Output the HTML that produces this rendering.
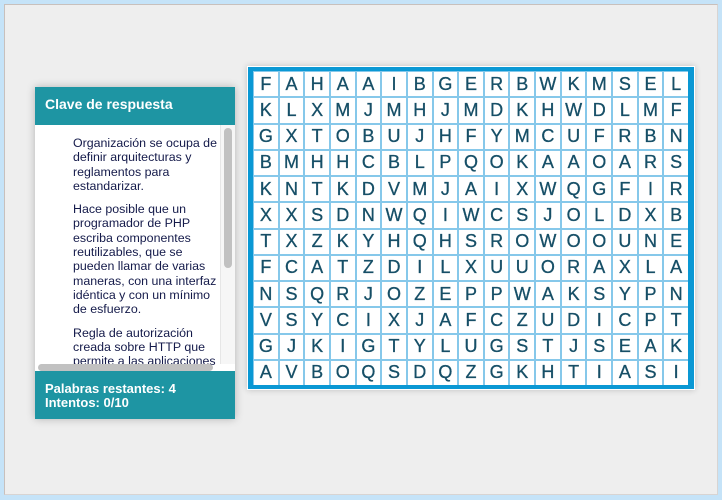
<!DOCTYPE html>
<html><head><meta charset="utf-8"><style>
html,body{margin:0;padding:0;}
body{width:722px;height:500px;background:#c5e3f8;position:relative;overflow:hidden;font-family:"Liberation Sans",Arial,sans-serif;}
.page{position:absolute;left:4px;top:4px;width:714px;height:491px;background:#eeeeee;border-top:1px solid #c8c0bc;border-left:1px solid #c8c0bc;border-right:1px solid #d8d4d2;border-bottom:1px solid #d8d4d2;box-sizing:border-box;}
.panel{position:absolute;left:35px;top:87px;width:200px;height:332px;background:#fff;box-shadow:0 0 8px rgba(0,0,0,0.25);}
.hdr{position:absolute;left:0;top:0;width:200px;height:38px;background:#1e95a3;color:#fff;font-weight:bold;font-size:14px;line-height:16px;box-sizing:border-box;padding:9px 0 0 10px;}
.body{position:absolute;left:0;top:38px;width:200px;height:246px;overflow:hidden;}
.txt{position:absolute;left:38px;top:11px;width:150px;font-size:12.4px;line-height:14.3px;color:#141a4a;}
.txt p{margin:0 0 9px 0;}
.vtrack{position:absolute;left:185px;top:0;width:15px;height:239px;background:#f6f6f6;border-left:1px solid #e6e6e6;}
.vthumb{position:absolute;left:189px;top:3px;width:8px;height:140px;background:#c1c1c1;border-radius:4px;}
.hthumb{position:absolute;left:3px;top:239px;width:175px;height:7px;background:#c1c1c1;border-radius:4px;}
.ftr{position:absolute;left:0;top:284px;width:200px;height:48px;background:#1e95a3;color:#fff;font-weight:bold;font-size:13px;line-height:14px;box-sizing:border-box;padding:11px 0 0 10px;}
.grid{position:absolute;left:247px;top:66px;width:448px;height:324px;background:#fff;box-shadow:0 0 6px rgba(0,0,0,0.2);}
.gi{position:absolute;left:1px;top:1px;width:446px;height:322px;background:#0a98d4;}
.cells{position:absolute;left:5px;top:4px;width:435px;height:314px;background:#86c8ea;display:grid;grid-template-columns:repeat(17,1fr);grid-template-rows:repeat(12,1fr);gap:1px;padding:0;}
.cells span{background:#fff;color:#164f67;font-size:18px;display:flex;align-items:center;justify-content:center;margin:1px 0 0 1px;-webkit-text-stroke:0.3px #164f67;}
</style></head><body>
<div class="page"></div>
<div class="panel">
<div class="hdr">Clave de respuesta</div>
<div class="body">
<div class="txt">
<p>Organización se ocupa de definir arquitecturas y reglamentos para estandarizar.</p>
<p>Hace posible que un programador de PHP escriba componentes reutilizables, que se pueden llamar de varias maneras, con una interfaz idéntica y con un mínimo de esfuerzo.</p>
<p>Regla de autorización creada sobre HTTP que permite a las aplicaciones</p>
</div>
<div class="vtrack"></div><div class="vthumb"></div>
<div class="hthumb"></div>
</div>
<div class="ftr">Palabras restantes: 4<br>Intentos: 0/10</div>
</div>
<div class="grid"><div class="gi"><div class="cells" id="c"></div></div></div>
<script>
var r=["FAHAAIBGERBWKMSEL","KLXMJMHJMDKHWDLMF","GXTOBUJHFYMCUFRBN","BMHHCBLPQOKAAOARS","KNTKDVMJAIXWQGFIR","XXSDNWQIWCSJOLDXB","TXZKYHQHSROWOOUNE","FCATZDILXUUORAXLA","NSQRJOZEPPWAKSYPN","VSYCIXJAFCZUDICPT","GJKIGTYLUGSTJSEAK","AVBOQSDQZGKHTIASI"];
var h="";r.forEach(function(s){for(var i=0;i<s.length;i++)h+="<span>"+s[i]+"</span>";});
document.getElementById("c").innerHTML=h;
</script>
</body></html>
